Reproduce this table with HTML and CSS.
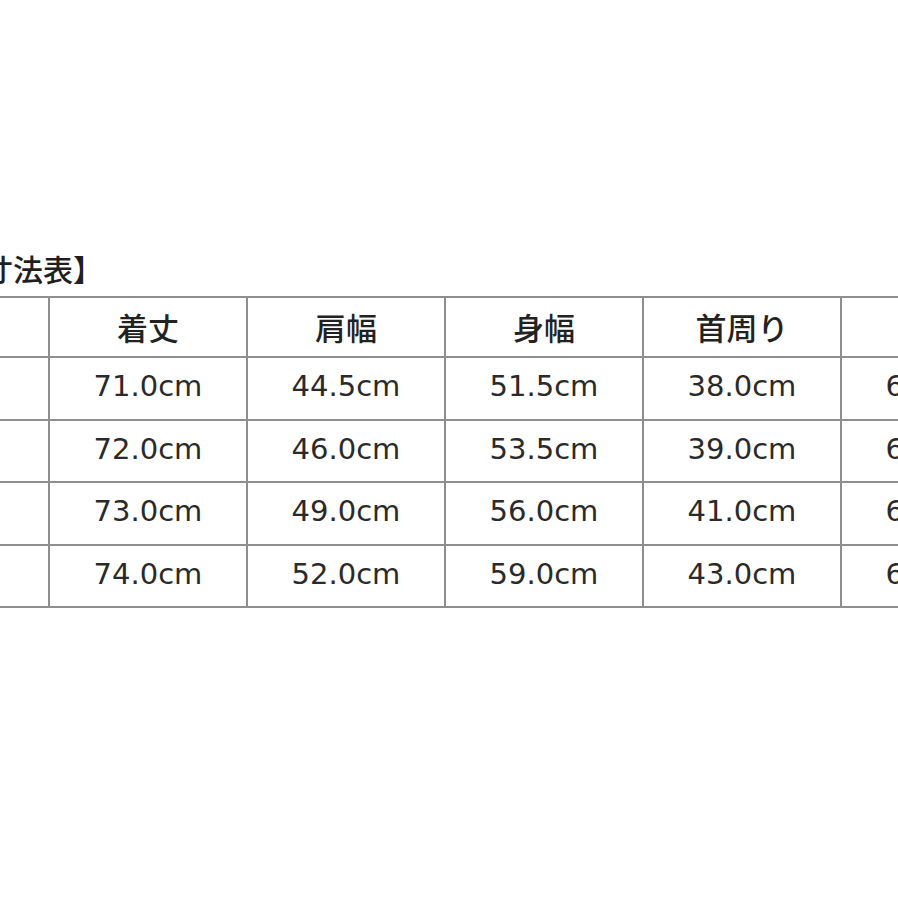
FILE: index.html
```html
<!DOCTYPE html>
<html lang="ja">
<head>
<meta charset="utf-8">
<title>寸法表</title>
<link rel="stylesheet" href="styles.css">
</head>
<body>
<div class="sheet">
  <h2 class="title">【寸法表】</h2>
  <table class="sizes">
    <thead>
      <tr>
        <th class="size"></th>
        <th>着丈</th>
        <th>肩幅</th>
        <th>身幅</th>
        <th>首周り</th>
        <th>袖丈</th>
      </tr>
    </thead>
    <tbody>
      <tr>
        <td class="size">S</td>
        <td>71.0cm</td>
        <td>44.5cm</td>
        <td>51.5cm</td>
        <td>38.0cm</td>
        <td>60.0cm</td>
      </tr>
      <tr>
        <td class="size">M</td>
        <td>72.0cm</td>
        <td>46.0cm</td>
        <td>53.5cm</td>
        <td>39.0cm</td>
        <td>61.0cm</td>
      </tr>
      <tr>
        <td class="size">L</td>
        <td>73.0cm</td>
        <td>49.0cm</td>
        <td>56.0cm</td>
        <td>41.0cm</td>
        <td>62.0cm</td>
      </tr>
      <tr>
        <td class="size">XL</td>
        <td>74.0cm</td>
        <td>52.0cm</td>
        <td>59.0cm</td>
        <td>43.0cm</td>
        <td>63.0cm</td>
      </tr>
    </tbody>
  </table>
</div>
</body>
</html>
```

FILE: styles.css
```css
html, body {
  margin: 0;
  padding: 0;
  background: #ffffff;
  overflow: hidden;
  width: 898px;
  height: 898px;
}

.sheet {
  margin-left: -150px;
  padding-top: 254px;
  width: 1200px;
  color: #2b2b2b;
}

.title {
  margin: 0 0 13px 0;
  padding-left: 103px;
  font-family: "Noto Sans CJK JP", "DejaVu Sans", sans-serif;
  font-size: 30px;
  line-height: 29px;
  font-weight: 500;
  color: #1f1f1f;
  letter-spacing: 0;
}

.sizes {
  border-collapse: collapse;
  table-layout: fixed;
  width: 1190px;
}

.sizes th,
.sizes td {
  width: 196px;
  padding: 0;
  border: 2px solid #8e8e8e;
  text-align: center;
  vertical-align: middle;
}

.sizes th {
  height: 56px;
  padding-bottom: 2px;
  font-family: "Noto Sans CJK JP", sans-serif;
  font-size: 31px;
  font-weight: 500;
  color: #222222;
  line-height: 1;
}

.sizes td {
  height: 57.5px;
  padding-bottom: 3px;
  font-family: "DejaVu Sans", "Noto Sans CJK JP", sans-serif;
  font-size: 29px;
  line-height: 1;
  color: #2a2a2a;
}
```
